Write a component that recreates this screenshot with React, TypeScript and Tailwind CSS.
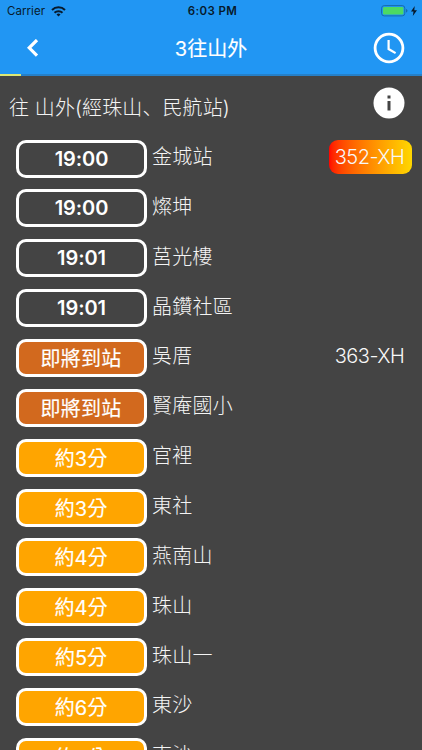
import React from "react";

type Status = "scheduled" | "arriving" | "soon";

interface Stop {
  name: string;
  time: string;
  status: Status;
  plate?: string;
  current?: boolean;
}

const stops: Stop[] = [
  { name: "金城站", time: "19:00", status: "scheduled", plate: "352-XH", current: true },
  { name: "燦坤", time: "19:00", status: "scheduled" },
  { name: "莒光樓", time: "19:01", status: "scheduled" },
  { name: "晶鑽社區", time: "19:01", status: "scheduled" },
  { name: "吳厝", time: "即將到站", status: "arriving", plate: "363-XH" },
  { name: "賢庵國小", time: "即將到站", status: "arriving" },
  { name: "官裡", time: "約3分", status: "soon" },
  { name: "東社", time: "約3分", status: "soon" },
  { name: "燕南山", time: "約4分", status: "soon" },
  { name: "珠山", time: "約4分", status: "soon" },
  { name: "珠山一", time: "約5分", status: "soon" },
  { name: "東沙", time: "約6分", status: "soon" },
  { name: "東沙", time: "約6分", status: "soon" },
];

const badgeStyles: Record<Status, string> = {
  scheduled: "bg-[#444444] font-semibold tracking-[-0.1px]",
  arriving: "bg-[#d2691e] pt-[2px] pr-px font-normal tracking-[0.2px] [-webkit-text-stroke:0.15px_white]",
  soon: "bg-[#ffa500] pt-[2px] pr-px font-normal [-webkit-text-stroke:0.15px_white]",
};

function StatusBar() {
  return (
    <div className="grid h-[22px] grid-cols-3 items-center pl-[7px] pr-[5px] text-[#071a2c]">
      <div className="flex items-center gap-[6px]">
        <span className="pt-px text-[11.5px] leading-none tracking-[0.05px]">Carrier</span>
        <svg width="15" height="11" viewBox="0 0 15 11" fill="none" stroke="currentColor" strokeWidth="2">
          <path d="M1 4a9.2 9.2 0 0 1 13 0" />
          <path d="M3.5 6.8a5.7 5.7 0 0 1 8 0" />
          <path d="M5.5 8.5a2.900 2.900 0 0 1 4 0l-2 2z" fill="currentColor" stroke="none" />
        </svg>
      </div>
      <span className="pl-px pt-px text-center text-[11.5px] font-semibold leading-none tracking-[0.35px]">6:03 PM</span>
      <div className="flex items-center justify-end gap-[3px]">
        <svg width="27" height="12" viewBox="0 0 27 12">
          <rect x=".6" y=".6" width="23.2" height="10.3" rx="2.6" fill="#2196f3" stroke="#176cae" strokeWidth="1" />
          <rect x="2" y="2" width="20.4" height="7.5" rx="1.3" fill="#4cd964" />
          <path d="M25 4v3.600c1-.3 1.500-1 1.500-1.800S26 4.300 25 4z" fill="#176cae" />
        </svg>
        <svg width="6" height="10" viewBox="0 0 6 10" fill="currentColor">
          <path d="M3.700 0 0 5.500h2.500L1.800 10 6 4.300H3.300z" />
        </svg>
      </div>
    </div>
  );
}

function NavBar() {
  return (
    <div className="grid h-[52px] grid-cols-[80px_1fr_80px] items-center text-white">
      <svg className="ml-[27px]" width="12" height="19" viewBox="0 0 12 19" fill="none" stroke="currentColor" strokeWidth="3.200">
        <path d="M10 1 2.200 8.800l7.800 7.800" />
      </svg>
      <h1 className="pt-[2px] text-center text-[20px] font-normal leading-none [-webkit-text-stroke:0.15px_white]">
        3往山外
      </h1>
      <svg className="mr-[17px] justify-self-end" width="32" height="32" viewBox="0 0 32 32" fill="none" stroke="currentColor">
        <circle cx="16" cy="16" r="13.900" strokeWidth="2.800" />
        <path d="M15.600 8v9l7 4.100" strokeWidth="2.200" />
      </svg>
    </div>
  );
}

function StopRow({ stop }: { stop: Stop }) {
  return (
    <li className="flex h-[49.870px] items-start pl-4 pr-[10px]">
      <div
        className={`flex h-[38px] w-[131px] shrink-0 items-center justify-center rounded-[10px] border-[3px] border-white text-[20px] leading-none text-white ${badgeStyles[stop.status]}`}
      >
        {stop.time}
      </div>
      <span className="ml-[5px] flex h-[35px] flex-1 items-center text-[20px] font-light leading-none tracking-[0.25px] text-[#f4f4f4]">
        {stop.name}
      </span>
      {stop.plate && (
        <span
          className={`flex h-[34px] w-[83px] items-center justify-center rounded-[9px] pr-[2px] text-[20px] font-light leading-none tracking-[-0.5px] text-[#f8f8f8] ${
            stop.current ? "bg-linear-to-r from-[#ff0000] to-[#ffd700]" : ""
          }`}
        >
          {stop.plate}
        </span>
      )}
    </li>
  );
}

export default function App() {
  return (
    <main className="h-[750px] w-[422px] overflow-hidden bg-[#444444] font-['Inter','Noto_Sans_CJK_TC',sans-serif]">
      <header className="bg-[#2196f3]">
        <StatusBar />
        <NavBar />
        <div className="h-[2px] bg-[#2680c8]">
          <div className="h-full w-[21px] bg-[#dce775]" />
        </div>
      </header>
      <section className="flex h-[63.500px] items-start justify-between pl-[9px] pr-[17px] pt-[11px]">
        <h2 className="mt-[10px] text-[20px] font-light leading-none tracking-[0.1px] text-[#f4f4f4]">
          往 山外(經珠山<span className="font-['Noto_Sans_CJK_SC',sans-serif]">、</span>民航站)
        </h2>
        <svg width="32" height="32" viewBox="0 0 32 32">
          <circle cx="16" cy="16" r="15.500" fill="white" />
          <path d="M14.500 8.500h3v3h-3zM14.500 14h3v9.500h-3z" fill="#444444" />
        </svg>
      </section>
      <ul>
        {stops.map((stop, index) => (
          <StopRow key={index} stop={stop} />
        ))}
      </ul>
    </main>
  );
}
